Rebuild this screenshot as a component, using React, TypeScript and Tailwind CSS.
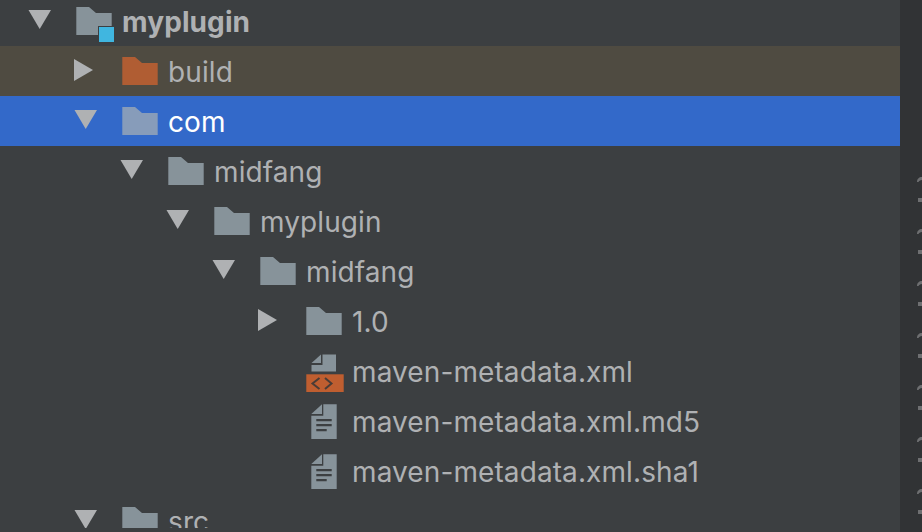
const font = "font-['Inter','Noto_Sans',sans-serif]";

function Arrow({ open }: { open: boolean }) {
  return (
    <svg width="24" height="24" viewBox="0 0 24 24" className="shrink-0">
      {open ? <polygon points="0.5,1 23,1 11.7,20" fill="#afb1b3" /> : <polygon points="0,0 19,11 0,22" fill="#afb1b3" />}
    </svg>
  );
}

function Folder({ color = "#87939a" }: { color?: string }) {
  return (
    <svg width="36" height="28" viewBox="0 0 36 28" className="shrink-0">
      <path d="M0.3 0H13L20 6H35.7V28H0.3Z" fill={color} />
    </svg>
  );
}

function ModuleFolder() {
  return (
    <svg width="38" height="42" viewBox="0 0 38 42" className="shrink-0">
      <path d="M0.3 7H13L20 13H35.7V35H0.3Z" fill="#87939a" />
      <rect x="22" y="26" width="16" height="16" fill="#3c3f41" />
      <rect x="23" y="27" width="15" height="15" fill="#40b6e0" />
    </svg>
  );
}

function FileIcon() {
  return (
    <svg width="38" height="36" viewBox="0 0 38 36" className="shrink-0">
      <path d="M5.3 11 16 1.3V11Z" fill="#87939a" />
      <path d="M17.3 1.3H30.7V36H5.3V12.7H17.3Z" fill="#87939a" />
      <path d="M10.3 16H25.7V18.3H10.3ZM10.3 21H25.7V23.3H10.3ZM10.3 26H20.7V28.3H10.3Z" fill="#3c3f41" />
    </svg>
  );
}

function XmlIcon() {
  return (
    <svg width="38" height="42" viewBox="0 0 38 42" className="shrink-0">
      <path d="M5.5 13 15 4.5V13Z" fill="#87939a" />
      <path d="M16.5 4.5H30V21.5H5.5V15H16.5Z" fill="#87939a" />
      <rect x="0.3" y="24.3" width="37.4" height="17.7" fill="#bf5e30" />
      <path d="M13.5 28 6.5 33.5 13.5 39M19 28 25.5 33.5 19 39" stroke="#4a3c36" strokeWidth="2" fill="none" />
    </svg>
  );
}

type RowProps = { indent: string; arrow?: "open" | "closed"; icon: React.ReactNode; label: string; bg?: string; text?: string; bold?: boolean };

function Row({ indent, arrow, icon, label, bg = "", text = "text-[#afb1b3]", bold }: RowProps) {
  return (
    <div className={`h-[50px] shrink-0 flex items-center ${bg}`}>
      <div className={`flex items-center ${indent}`}>
        <div className="w-[48px] flex items-center">{arrow && <Arrow open={arrow === "open"} />}</div>
        <div className="w-[46px] flex items-center">{icon}</div>
        <span className={`text-[28px] leading-none pt-[2px] tracking-[0.1px] ${text} ${bold ? "font-bold" : ""}`}>{label}</span>
      </div>
    </div>
  );
}

export default function App() {
  const marks = [0, 1, 2, 3, 4, 5, 6];
  return (
    <div className={`w-[922px] h-[532px] overflow-hidden flex bg-[#3c3f41] ${font}`}>
      <div className="w-[900px] h-full flex flex-col overflow-hidden -mt-1">
        <Row indent="pl-[28px]" arrow="open" icon={<ModuleFolder />} label="myplugin" bold />
        <Row indent="pl-[74px]" arrow="closed" icon={<Folder color="#b05d33" />} label="build" bg="bg-[#4f4b41]" />
        <Row indent="pl-[74px]" arrow="open" icon={<Folder color="#879cba" />} label="com" bg="bg-[#3369c9]" text="text-white" />
        <Row indent="pl-[120px]" arrow="open" icon={<Folder />} label="midfang" />
        <Row indent="pl-[166px]" arrow="open" icon={<Folder />} label="myplugin" />
        <Row indent="pl-[212px]" arrow="open" icon={<Folder />} label="midfang" />
        <Row indent="pl-[258px]" arrow="closed" icon={<Folder />} label="1.0" />
        <Row indent="pl-[258px]" icon={<XmlIcon />} label="maven-metadata.xml" />
        <Row indent="pl-[258px]" icon={<FileIcon />} label="maven-metadata.xml.md5" />
        <Row indent="pl-[258px]" icon={<FileIcon />} label="maven-metadata.xml.sha1" />
        <Row indent="pl-[74px]" arrow="open" icon={<Folder />} label="src" />
      </div>
      <div className="w-[22px] h-full bg-[#313335] flex flex-col items-end pt-[172px] gap-[22px] overflow-hidden">
        {marks.map((m) => (
          <svg key={m} width="6" height="30" viewBox="0 0 6 30" className="shrink-0">
            <path d="M1 10C1 7 3 5 6 5V8C4 8 3 9 2.5 10Z" fill="#6e6f71" />
            <rect x="2" y="26" width="4" height="4" fill="#6e6f71" />
          </svg>
        ))}
      </div>
    </div>
  );
}
